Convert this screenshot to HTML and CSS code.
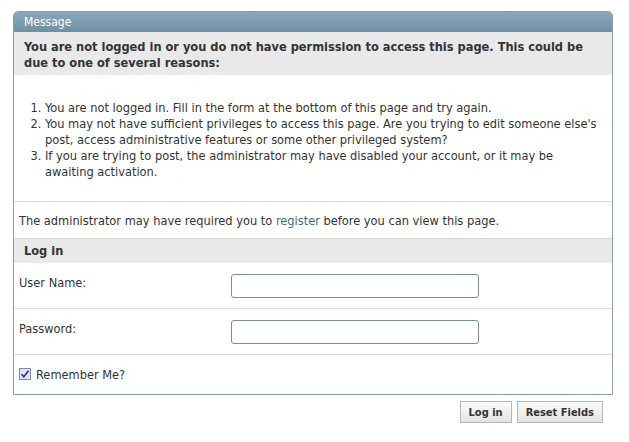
FILE: index.html
```html
<!DOCTYPE html>
<html>
<head>
<meta charset="utf-8">
<link rel="stylesheet" href="styles.css">
</head>
<body>
<div class="page">
  <div class="panel">
    <div class="panel-head">Message</div>
    <div class="notice">You are not logged in or you do not have permission to access this page. This could be due to one of several reasons:</div>
    <div class="reasons">
      <ol>
        <li>You are not logged in. Fill in the form at the bottom of this page and try again.</li>
        <li>You may not have sufficient privileges to access this page. Are you trying to edit someone else's post, access administrative features or some other privileged system?</li>
        <li>If you are trying to post, the administrator may have disabled your account, or it may be awaiting activation.</li>
      </ol>
    </div>
    <div class="register">The administrator may have required you to <a href="#">register</a> before you can view this page.</div>
    <div class="section-head">Log in</div>
    <div class="row">
      <label class="label">User Name:</label>
      <input class="field" type="text">
    </div>
    <div class="row">
      <label class="label">Password:</label>
      <input class="field" type="password">
    </div>
    <div class="row remember">
      <span class="check"><svg width="12" height="12" viewBox="0 0 12 12"><rect x="0.5" y="0.5" width="11" height="11" fill="#dfe2f0" stroke="#7f87a8"/><path d="M2.5 6.2 L4.8 8.8 L9.5 2.8" fill="none" stroke="#2a3580" stroke-width="1.6"/></svg></span>
      <span>Remember Me?</span>
    </div>
  </div>
  <div class="actions">
    <button class="btn">Log in</button>
    <button class="btn">Reset Fields</button>
  </div>
</div>
</body>
</html>
```
FILE: styles.css
```css
html, body { margin: 0; padding: 0; background: #fff; }
body { font-family: "DejaVu Sans Condensed", "DejaVu Sans", sans-serif; font-size: 12.7px; color: #333; }
.page { padding: 11px 16px 0 13px; width: 600px; }
.panel { border: 1px solid #8b9ba7; border-radius: 5px 5px 0 0; overflow: hidden; }
.panel-head { height: 20px; line-height: 20px; padding-left: 10px; color: #fff; background: linear-gradient(#8aa8bb, #6f8fa5); font-size: 12px; }
.notice { background: #e9e9e9; padding: 7px 10px 4px; font-weight: bold; font-size: 12.7px; line-height: 16px; color: #333; height: 32px; }
.reasons { padding: 25px 0 21px 0; border-bottom: 1px solid #dcdcdc; }
.reasons ol { margin: 0; padding: 0 14px 0 31px; line-height: 16px; }
.register { padding: 11px 5px 9px; line-height: 16px; }
.register a { color: #3e6d8a; text-decoration: none; }
.section-head { background: #e9e9e9; border-top: 1px solid #d4d4d4; height: 24px; line-height: 24px; padding-left: 10px; font-weight: bold; font-size: 12.7px; }
.row { display: flex; align-items: center; height: 45px; border-bottom: 1px solid #d4dde3; padding-left: 5px; }
.label { width: 212px; margin-top: -7px; }
.field { width: 248px; height: 24px; box-sizing: border-box; border: 1px solid #7e8d97; border-radius: 3px; padding: 0 4px; font: inherit; }
.remember { border-bottom: none; height: 39px; gap: 5px; }
.check { display: flex; margin-top: -1px; }
.actions { display: flex; justify-content: flex-end; gap: 5px; padding-top: 6px; padding-right: 10px; }
.btn { height: 22px; padding: 0 8px; font: bold 11px "DejaVu Sans Condensed", "DejaVu Sans", sans-serif; color: #333; background: linear-gradient(#fbfbfb, #e4e4e4); border: 1px solid #b5b5b5; border-radius: 0; }
```
